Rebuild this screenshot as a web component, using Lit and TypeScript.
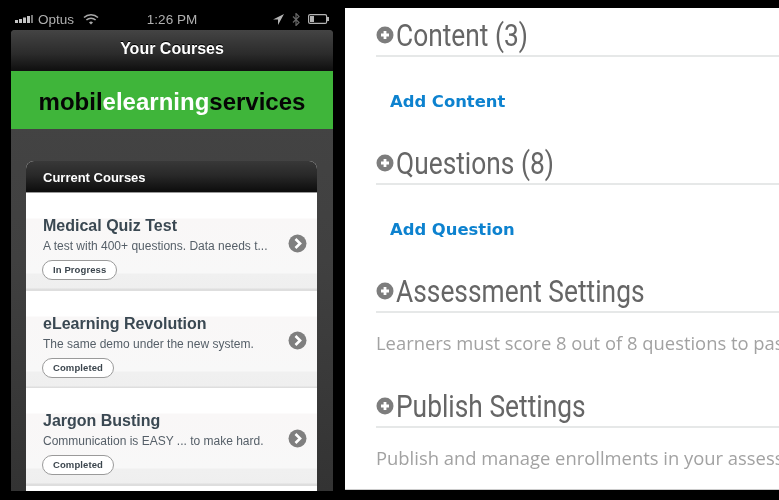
import { LitElement, html, css } from "lit";
import { customElement } from "lit/decorators.js";

const courses = [
  { title: "Medical Quiz Test", desc: "A test with 400+ questions. Data needs t...", status: "In Progress" },
  { title: "eLearning Revolution", desc: "The same demo under the new system.", status: "Completed" },
  { title: "Jargon Busting", desc: "Communication is EASY ... to make hard.", status: "Completed" },
];

const chevron = html`<svg class="chev" width="19" height="19" viewBox="0 0 19 19"><circle cx="9.5" cy="9.5" r="9" fill="#7f7f7f"/><path d="M7.5 5l4.6 4.5-4.6 4.5" fill="none" stroke="#fff" stroke-width="2.6"/></svg>`;
const plus = html`<svg class="plus" width="18" height="18" viewBox="0 0 18 18"><circle cx="9" cy="9" r="8.5" fill="#7d7d7d"/><path d="M9 5v8M5 9h8" stroke="#fff" stroke-width="2.8"/></svg>`;

@customElement("app-root")
export class AppRoot extends LitElement {
  static styles = css`
    :host { display: block; width: 779px; height: 500px; background: #000; overflow: hidden; }
    .page { display: flex; width: 779px; height: 500px; font-family: "Liberation Sans", Arial, sans-serif; }
    .phone { width: 345px; flex: none; padding: 10px 12px 0 11px; box-sizing: border-box; filter: blur(0.7px); }
    .status { height: 20px; padding: 0 4px 2px 4px; box-sizing: border-box; display: grid; grid-template-columns: 1fr auto 1fr; align-items: center; color: #b0b0b0; font-size: 13.5px; }
    .status .l { display: flex; align-items: center; gap: 3px; }
    .status .r { display: flex; align-items: center; justify-content: flex-end; gap: 8px; }
    .screen { height: 461px; border-radius: 4px 4px 0 0; background: linear-gradient(#454545, #404040 50%, #333); overflow: hidden; }
    .nav { height: 41px; box-sizing: border-box; display: flex; align-items: center; justify-content: center; background: linear-gradient(#444, #2b2b2b 60%, #101010); color: #fff; font-weight: 700; font-size: 16px; padding-bottom: 2px; border-bottom: 1px solid #111; text-shadow: 0 -1px 0 #000; }
    .brand { height: 58px; box-sizing: border-box; padding-top: 3px; background: #3fb53a; display: flex; align-items: center; justify-content: center; font-weight: 700; font-size: 24px; color: #050505; }
    .brand b { color: #fff; font-weight: 700; }
    .card { margin: 32px 16px 0 15px; border-radius: 8px 8px 0 0; overflow: hidden; background: #fff; }
    .card-head { height: 32px; box-sizing: border-box; display: flex; align-items: center; padding: 2px 0 0 17px; background: linear-gradient(#383838, #292929 45%, #0c0c0c); color: #fff; font-size: 13px; font-weight: 700; border-bottom: 1px solid #999; }
    .item { height: 97.5px; box-sizing: border-box; display: flex; align-items: center; gap: 10px; padding: 3px 10px 0 17px; background: linear-gradient(#fff 0, #fff 25px, #f9f7f7 26px, #f8f8f8 80px, #f0f0f0 81px, #efefef 95px, #dedede 96px); }
    .tx { flex: 1; min-width: 0; padding-top: 10px; }
    .title { font-size: 16px; font-weight: 700; color: #3a4852; line-height: 20px; }
    .desc { font-size: 12px; color: #555f68; line-height: 14px; margin-top: 3px; white-space: nowrap; }
    .badge { display: inline-block; margin: 7px 0 0 -1px; height: 20px; box-sizing: border-box; border: 1.5px solid #9a9a9a; border-radius: 10px; background: #fff; color: #3c464e; font-size: 9.5px; font-weight: 700; line-height: 17px; padding: 0 10px; letter-spacing: 0.1px; }
    .chev { flex: none; }
    .sliver { height: 6px; background: #fff; }

    .panel { flex: 1; margin-top: 8px; height: 482px; box-sizing: border-box; background: #fff; padding-left: 31px; border-bottom: 1px solid #ccc; overflow: hidden; filter: blur(0.5px); }
    .head { display: flex; align-items: center; height: 49px; padding-top: 6px; box-sizing: border-box; border-bottom: 2px solid #e6e8e8; color: #666; white-space: nowrap; }
    .plus { flex: none; margin-right: 2px; }
    .head span { font-family: Roboto, sans-serif; font-size: 31px; display: inline-block; margin-top: 2px; transform: scaleX(0.85); transform-origin: left center; }
    .add { display: flex; align-items: center; height: 79px; padding: 9px 0 0 14px; box-sizing: border-box; color: #0d82cf; font-family: "DejaVu Sans", sans-serif; font-weight: 700; font-size: 16.4px; }
    .note { display: flex; align-items: center; height: 66px; padding-bottom: 8px; box-sizing: border-box; font-family: "Open Sans", sans-serif; font-size: 18.4px; color: #a2a2a2; white-space: nowrap; }
  `;

  render() {
    return html`<div class="page">
      <div class="phone">
        <div class="status">
          <div class="l">
            <svg width="20" height="8" viewBox="0 0 20 8" fill="#c4c4c4"><rect x="0" y="5" width="3" height="3"/><rect x="4" y="4" width="3" height="4"/><rect x="8" y="2.5" width="3" height="5.5"/><rect x="12" y="1" width="3" height="7"/><rect x="16" y="0" width="2" height="8" fill="#777"/></svg>
            <span>Optus</span>
            <svg style="margin-left:6px" width="16" height="12" viewBox="0 0 16 12" fill="none" stroke="#a8a8a8" stroke-width="1.5"><path d="M1 4.5a10 10 0 0 1 14 0M3.4 7a6.6 6.6 0 0 1 9.2 0"/><path d="M6 9.5a3 3 0 0 1 4 0L8 11.5z" fill="#a8a8a8" stroke="none"/></svg>
          </div>
          <span>1:26 PM</span>
          <div class="r">
            <svg width="11" height="11" viewBox="0 0 11 11" fill="#b4b4b4"><path d="M11 0L0 5.5h5V11z"/></svg>
            <svg width="8" height="13" viewBox="0 0 8 13" fill="none" stroke="#666" stroke-width="1.2"><path d="M1 3.5l6 6-3 3V.5l3 3-6 6"/></svg>
            <svg width="21" height="10" viewBox="0 0 21 10" fill="none"><rect x="0.6" y="0.6" width="18" height="8.8" rx="1.5" stroke="#b4b4b4" stroke-width="1.2"/><rect x="2" y="2" width="4" height="6" fill="#b4b4b4"/><rect x="19" y="3" width="2" height="4" fill="#b4b4b4"/></svg>
          </div>
        </div>
        <div class="screen">
          <div class="nav">Your Courses</div>
          <div class="brand"><span>mobil<b>elearning</b>services</span></div>
          <div class="card">
            <div class="card-head">Current Courses</div>
            ${courses.map(c => html`<div class="item">
              <div class="tx">
                <div class="title">${c.title}</div>
                <div class="desc">${c.desc}</div>
                <span class="badge">${c.status}</span>
              </div>
              ${chevron}
            </div>`)}
            <div class="sliver"></div>
          </div>
        </div>
      </div>
      <div class="panel">
        <div class="head">${plus}<span>Content (3)</span></div>
        <div class="add">Add Content</div>
        <div class="head">${plus}<span>Questions (8)</span></div>
        <div class="add">Add Question</div>
        <div class="head">${plus}<span>Assessment Settings</span></div>
        <div class="note">Learners must score 8 out of 8 questions to pass this assessment.</div>
        <div class="head">${plus}<span>Publish Settings</span></div>
        <div class="note">Publish and manage enrollments in your assessment.</div>
      </div>
    </div>`;
  }
}
